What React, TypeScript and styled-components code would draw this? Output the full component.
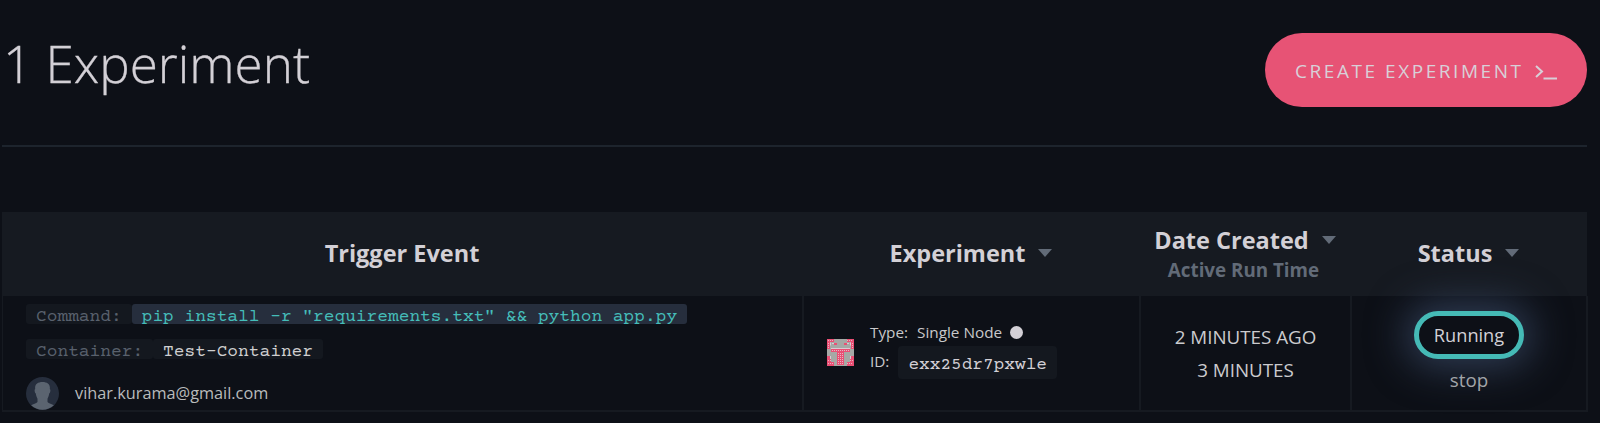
import React from 'react';
import styled, { createGlobalStyle } from 'styled-components';

const GlobalStyle = createGlobalStyle`
  * { box-sizing: border-box; }
  body {
    margin: 0;
    background: #0d1017;
    color: #d3d0d6;
    font-family: 'Open Sans', 'Noto Sans', sans-serif;
    overflow: hidden;
  }
`;

const Page = styled.main`
  height: 423px;
  padding: 0 13px 0 2px;
`;

const Header = styled.header`
  display: flex;
  justify-content: space-between;
  height: 147px;
  padding-top: 33px;
  border-bottom: 2px solid #1d242d;
`;

const Title = styled.h1`
  margin: 0;
  padding: 1px 0 0 1px;
  font-size: 51.2px;
  font-weight: 300;
  line-height: 59px;
  -webkit-text-stroke: 0.3px currentColor;
`;

const CreateButton = styled.button`
  display: flex;
  align-items: center;
  width: 322px;
  height: 74px;
  padding: 2px 0 0 30px;
  border: 0;
  border-radius: 37px;
  background: #e75375;
  color: #d8d0d8;
  font: 400 19px/26px 'Open Sans', sans-serif;
  letter-spacing: 2.55px;
  white-space: nowrap;
`;

const PromptIcon = styled.svg`
  width: 23px;
  height: 15px;
  margin: 2px 0 0 11px;
  fill: none;
  stroke: currentColor;
  stroke-width: 2;
`;

const Table = styled.section`
  margin-top: 65px;
  border-left: 1px solid #161a21;
`;

const Columns = styled.div`
  display: grid;
  grid-template-columns: 801px 337px 211px 1fr;
`;

const HeadRow = styled(Columns)`
  height: 84px;
  background: #161a21;
  margin-left: -1px;
`;

const BodyRow = styled(Columns)`
  height: 116px;
  margin: 0 -1px 0 0;
  border-bottom: 2px solid #161a21;
`;

const HeadCell = styled.div`
  display: flex;
  flex-direction: column;
  align-items: center;
  justify-content: center;
  padding: 0 1px 2px 0;
`;

const HeadLabel = styled.div`
  display: flex;
  align-items: center;
  gap: 13px;
  font-size: 23.5px;
  font-weight: 700;
  line-height: 32px;
  white-space: nowrap;
`;

const SubLabel = styled.div`
  padding: 1px 3px 0 0;
  color: #626b78;
  font-size: 18.8px;
  font-weight: 700;
  line-height: 26px;
`;

const SortArrow = styled.svg`
  width: 14px;
  height: 8px;
  fill: #626b78;
`;

const Cell = styled.div`
  border-right: 2px solid #161a21;
`;

const TriggerCell = styled(Cell)`
  padding: 8px 0 0 23px;
`;

const CodeLine = styled.div`
  display: flex;
  height: 20px;
  margin-bottom: 15px;
`;

const Code = styled.code<{ $tone: 'label' | 'command' | 'plain' }>`
  height: 20px;
  padding: 5px 10px 0;
  border-radius: 3px;
  background: ${(p) => (p.$tone === 'command' ? '#262e3d' : '#14181f')};
  color: ${(p) => ({ label: '#59616d', command: '#45bdb9', plain: '#cfcfd0' })[p.$tone]};
  font: 400 17.88px/16px 'Courier Prime', 'FreeMono', 'Liberation Mono', monospace;
  white-space: pre;
`;

const User = styled.div`
  display: flex;
  align-items: center;
  gap: 16px;
  margin-top: 18px;
  font-size: 16.3px;
  line-height: 24px;
  color: #b9bbbc;
`;

const Email = styled.span`
  padding-bottom: 1px;
`;

const Avatar = styled.svg`
  width: 33px;
  height: 33px;
`;

const ExperimentCell = styled(Cell)`
  display: flex;
  align-items: flex-start;
  padding: 25px 0 0 23px;
`;

const Identicon = styled.svg`
  width: 27px;
  height: 27px;
  margin: 18px 16px 0 0;
`;

const Details = styled.div`
  font-size: 15.3px;
  line-height: 22px;
  color: #c8c8ca;
`;

const DetailLine = styled.div`
  display: flex;
  align-items: center;
`;

const IdLine = styled(DetailLine)`
  margin-top: 3px;
  height: 33px;
`;

const Key = styled.span<{ $gap: number }>`
  margin-right: ${(p) => p.$gap}px;
`;

const IdKey = styled(Key)`
  padding-bottom: 3px;
`;

const NodeDot = styled.span`
  width: 13px;
  height: 13px;
  margin-left: 8px;
  border-radius: 50%;
  background: #d3d0d6;
`;

const IdCode = styled.code`
  height: 33px;
  padding: 5px 10px 0;
  border-radius: 4px;
  background: #14181f;
  color: #d3d0d6;
  font: 400 17.8px/29px 'Courier Prime', 'FreeMono', 'Liberation Mono', monospace;
`;

const TimeCell = styled(Cell)`
  padding-top: 25px;
  text-align: center;
  font-size: 18.8px;
  line-height: 33px;
  color: #cbcbce;
`;

const StatusCell = styled(Cell)`
  display: flex;
  flex-direction: column;
  align-items: center;
  padding-top: 15px;
`;

const StatusPill = styled.div`
  position: relative;
  display: flex;
  align-items: center;
  justify-content: center;
  width: 110px;
  height: 48px;
  border: 5px solid #45bab6;
  border-radius: 24px;
  background: #0d1017;
  box-shadow: 0 0 38px 9px rgba(52, 66, 92, 0.85);
  font-size: 18.2px;
  line-height: 24px;
`;

const StopLink = styled.a`
  position: relative;
  margin-top: 9px;
  font-size: 18.8px;
  line-height: 24px;
  color: #a2a5a9;
`;

const Arrow = () => (
  <SortArrow viewBox="0 0 14 8">
    <path d="M0 0h14L7 8z" />
  </SortArrow>
);

export default function App() {
  return (
    <>
      <GlobalStyle />
      <Page>
        <Header>
          <Title>1 Experiment</Title>
          <CreateButton>
            CREATE EXPERIMENT
            <PromptIcon viewBox="0 0 23 15">
              <path d="M1 1l6 5.500L1 12M8.500 13.500H22" />
            </PromptIcon>
          </CreateButton>
        </Header>
        <Table>
          <HeadRow>
            <HeadCell>
              <HeadLabel>Trigger Event</HeadLabel>
            </HeadCell>
            <HeadCell>
              <HeadLabel>
                Experiment <Arrow />
              </HeadLabel>
            </HeadCell>
            <HeadCell>
              <HeadLabel>
                Date Created <Arrow />
              </HeadLabel>
              <SubLabel>Active Run Time</SubLabel>
            </HeadCell>
            <HeadCell>
              <HeadLabel>
                Status <Arrow />
              </HeadLabel>
            </HeadCell>
          </HeadRow>
          <BodyRow>
            <TriggerCell>
              <CodeLine>
                <Code $tone="label">Command:</Code>
                <Code $tone="command">pip install -r "requirements.txt" &amp;&amp; python app.py</Code>
              </CodeLine>
              <CodeLine>
                <Code $tone="label">Container:</Code>
                <Code $tone="plain">Test-Container</Code>
              </CodeLine>
              <User>
                <Avatar viewBox="0 0 33 33">
                  <circle cx="16.5" cy="16.5" r="16.5" fill="#262e3d" />
                  <path
                    d="M9.2 12C8.5 7.500 11.500 5 16.500 5s8 2.500 7.300 7c1 .3.600 3.800-.5 4.300-.4 2.600-1.200 4.200-1.800 5.500v3.200c1.200 1.700 4.500 1.900 6.300 3.200A16.500 16.500 0 0 1 5.200 28.200c1.800-1.300 5.100-1.500 6.300-3.200v-3.200c-.6-1.300-1.400-2.900-1.800-5.500-1.100-.5-1.500-4-.5-4.300z"
                    fill="#5b6470"
                  />
                </Avatar>
                <Email>vihar.kurama@gmail.com</Email>
              </User>
            </TriggerCell>
            <ExperimentCell>
              <Identicon viewBox="0 0 27 27">
                <path d="M0 0h27v27H0z" fill="#a6a8a5" />
                <path
                  d="M0 0h7v3H3v7H0zM20 0h7v10h-3V3h-4zM7 4h3v2H7zM17 4h3v2h-3zM4 10h19v3h-6v13h-7V13H4zM0 17h3v3H0zM24 17h3v3h-3zM0 20h4v3h3v4H0zM27 20h-4v3h-3v4h7z"
                  fill="#ea4f74"
                />
                <path
                  d="M3.500 3.500v3M23.500 3.500v3M7 4.500h-2M20 4.500h2M3.500 17v3M23.500 17v3M4 9.500h19"
                  fill="none"
                  stroke="#d9cbd2"
                />
                <path
                  d="M1 1.500h6M20 1.500h6M1.500 4v6M25.500 4v6M5 11.500h17M11.500 14v12M13.500 14v12M15.500 14v12M1 21.500h3M1 24.500h6M23 21.500h3M20 24.500h6"
                  fill="none"
                  stroke="#e6b5c3"
                  strokeDasharray="1 1"
                />
              </Identicon>
              <Details>
                <DetailLine>
                  <Key $gap={9}>Type:</Key>
                  Single Node
                  <NodeDot />
                </DetailLine>
                <IdLine>
                  <IdKey $gap={9}>ID:</IdKey>
                  <IdCode>exx25dr7pxwle</IdCode>
                </IdLine>
              </Details>
            </ExperimentCell>
            <TimeCell>
              <div>2 MINUTES AGO</div>
              <div>3 MINUTES</div>
            </TimeCell>
            <StatusCell>
              <StatusPill>Running</StatusPill>
              <StopLink>stop</StopLink>
            </StatusCell>
          </BodyRow>
        </Table>
      </Page>
    </>
  );
}
